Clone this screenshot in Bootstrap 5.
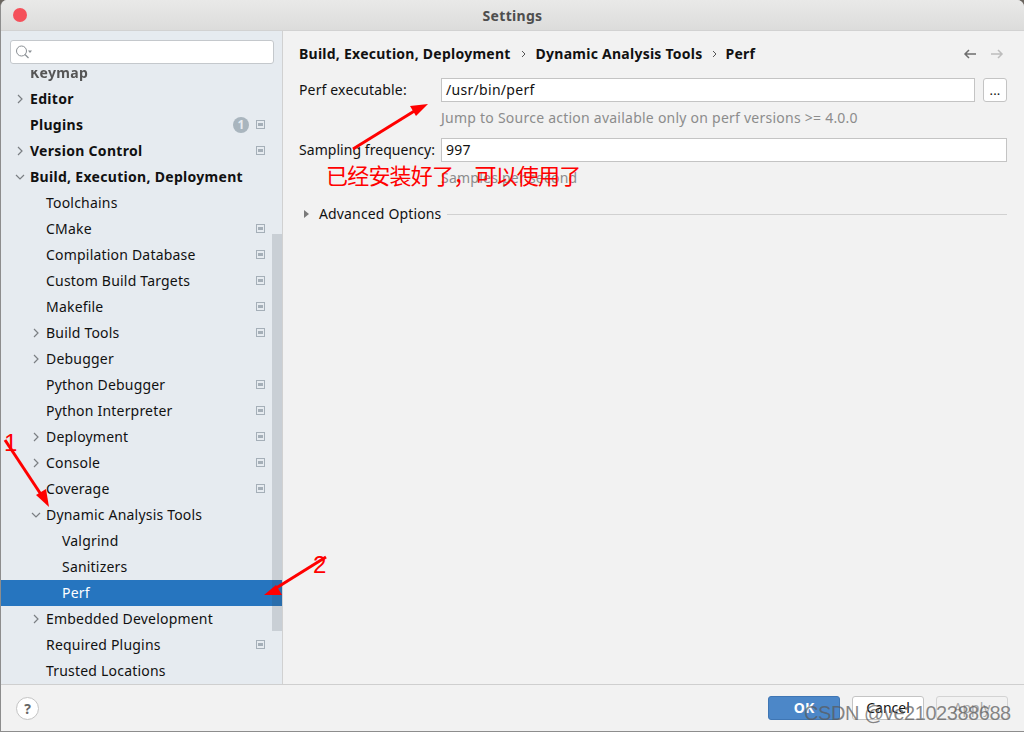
<!DOCTYPE html>
<html lang="en">
<head>
  <meta charset="UTF-8" />
  <title>Settings</title>
  <link href="https://cdn.jsdelivr.net/npm/bootstrap@5.3.0/dist/css/bootstrap.min.css" rel="stylesheet" />
  <style>
    html, body { margin: 0; width: 1024px; height: 732px; overflow: hidden; background: #6b6660; }
    body { font-family: "Noto Sans", "Noto Sans CJK SC", sans-serif; font-size: 14px; color: #111; }
    .win { width: 1024px; height: 732px; position: relative; background: #f2f2f2; border-left: 1px solid #8d8d8d; border-bottom: 1px solid #8d8d8d; border-radius: 7px 7px 0 0; overflow: hidden; }
    .titlebar { height: 31px; background: linear-gradient(#e9e9e8, #dcdcdb); border-bottom: 1px solid #d2d2d2; position: relative; }
    .titlebar-name { font-weight: 700; font-size: 14px; color: #4e4e4e; line-height: 31px; letter-spacing: .3px; }
    .close-dot { width: 14px; height: 14px; border-radius: 50%; background: #f5505a; position: absolute; left: 12px; top: 8px; }
    .main-area { height: 653px; }
    .side { width: 282px; background: #e6ebf0; border-right: 1px solid #d1d1d1; flex: none; position: relative; overflow: hidden; }
    .search { height: 24px; margin: 9px 8px 0 9px; background: #fff; border: 1px solid #c4c8cc; border-radius: 3px; }
    .tree { height: 614px; margin-top: 6px; overflow: hidden; }
    .tree-in { margin-top: -10px; }
    .t-row { height: 26px; line-height: 26px; position: relative; white-space: nowrap; }
    .t-row.sel { background: #2675bf; color: #fff; }
    .bold-row { font-weight: 700; padding-left: 29px; letter-spacing: .3px; }
    .l1 { padding-left: 45px; letter-spacing: .2px; }
    .l2 { padding-left: 61px; letter-spacing: .2px; }
    .keymap-row { color: #555; filter: blur(.5px); }
    .chev { position: absolute; top: 8px; width: 10px; height: 10px; }
    .proj-ic { position: absolute; top: 8px; left: 255px; width: 9px; height: 9px; border: 1px solid #a5afb8; background: #e6ebf0; }
    .proj-ic::after { content: ""; display: block; margin: 2px 1px 0; height: 3px; background: #a5afb8; }
    .count { position: absolute; left: 232px; top: 5px; width: 16px; height: 16px; border-radius: 8px; background: #a9b5be; color: #e6ebf0; font-size: 12px; font-weight: 700; line-height: 16px; text-align: center; letter-spacing: 0; }
    .thumb { position: absolute; left: 271px; top: 203px; width: 10px; height: 397px; background: rgba(60, 70, 85, .17); }
    .content { padding: 13px 17px 0 16px; }
    .crumbs { height: 20px; line-height: 20px; font-weight: 700; letter-spacing: .25px; }
    .crumb-gt { margin: 0 9px 0 10px; }
    .crumb-gt.last { margin: 0 8px 0 9px; }
    .nav-arrows { gap: 13px; margin-right: 3px; }
    .form-line { height: 24px; line-height: 24px; letter-spacing: .15px; white-space: nowrap; }
    .line-first { margin-top: 14px; }
    .line-second { margin-top: 10px; }
    .line-adv { margin-top: 14px; }
    .form-lab { width: 142px; flex: none; }
    .lab-tight { letter-spacing: .05px; }
    .inp { height: 24px; background: #fff; border: 1px solid #c4c4c4; padding-left: 4px; line-height: 22px; letter-spacing: .3px; }
    .dots { width: 24px; height: 24px; margin-left: 8px; flex: none; background: #fff; border: 1px solid #c4c4c4; border-radius: 3px; text-align: center; line-height: 22px; font-size: 13px; }
    .hint { margin-top: 6px; margin-left: 142px; color: #8c8c8c; letter-spacing: .24px; line-height: 20px; height: 20px; }
    .adv-line { flex: 1; height: 1px; background: #d1d1d1; margin-left: 6px; }
    .foot { height: 47px; border-top: 1px solid #cfcfcf; background: #f2f2f2; padding: 0 16px 0 15px; }
    .help { width: 23px; height: 23px; border-radius: 50%; background: #fff; border: 1px solid #c4c4c4; text-align: center; font-weight: 700; font-size: 14px; line-height: 21px; color: #666; }
    .btn-gap { gap: 12px; }
    .dlg-btn { width: 72px; height: 24px; border: 1px solid #c4c4c4; border-radius: 3px; background: #fff; font-size: 14px; line-height: 22px; text-align: center; }
    .dlg-btn.ok { background: #4c87c8; border-color: #3f76b4; color: #fff; font-weight: 700; }
    .dlg-btn.off { background: #f2f2f2; border-color: #d3d3d3; color: #a8a8a8; }
    .note { position: absolute; left: 325px; top: 159px; font-family: "Noto Sans CJK SC", sans-serif; font-size: 22px; line-height: 30px; color: #f00; white-space: nowrap; letter-spacing: -.8px; }
    .num-mark { position: absolute; font-family: "Liberation Sans", sans-serif; font-size: 24px; color: #f00; line-height: 24px; }
    .mark-one { left: 3px; top: 431px; }
    .mark-two { left: 312px; top: 553px; }
    .marks { position: absolute; left: 0; top: 0; }
    .wm { position: absolute; left: 803px; top: 701px; font-family: "Liberation Sans", sans-serif; font-size: 20px; line-height: 24px; color: rgba(90, 90, 90, .72); white-space: nowrap; letter-spacing: -.45px; }
  </style>
</head>
<body>
<div class="win">
  <div class="titlebar text-center">
    <span class="close-dot"></span>
    <span class="titlebar-name">Settings</span>
  </div>
  <div class="main-area d-flex">
    <!-- Left tree -->
    <div class="side">
      <div class="search d-flex align-items-center ps-1">
        <svg width="18" height="16" viewBox="0 0 18 16"><circle cx="6.5" cy="7" r="5" fill="none" stroke="#8a8f94"/><path d="M10 10.5l3.5 3.5" stroke="#8a8f94" stroke-width="1.3"/><path d="M13 6.5h4l-2 2.5z" fill="#8a8f94"/></svg>
      </div>
      <div class="tree">
        <div class="tree-in" id="tree"></div>
      </div>
      <div class="thumb"></div>
    </div>
    <!-- Right panel -->
    <div class="content flex-grow-1">
      <div class="crumbs d-flex align-items-center">
        <span>Build, Execution, Deployment</span>
        <svg class="crumb-gt" width="6" height="10" viewBox="0 0 6 10"><path d="M1 2l3 3-3 3" fill="none" stroke="#555"/></svg>
        <span>Dynamic Analysis Tools</span>
        <svg class="crumb-gt last" width="6" height="10" viewBox="0 0 6 10"><path d="M1 2l3 3-3 3" fill="none" stroke="#555"/></svg>
        <span>Perf</span>
        <span class="ms-auto d-flex nav-arrows">
          <svg width="14" height="12" viewBox="0 0 14 12"><path d="M13 6H2M6 2L2 6l4 4" fill="none" stroke="#6e6e6e" stroke-width="1.5"/></svg>
          <svg width="14" height="12" viewBox="0 0 14 12"><path d="M1 6h11M8 2l4 4-4 4" fill="none" stroke="#bdbdbd" stroke-width="1.5"/></svg>
        </span>
      </div>
      <div class="form-line line-first d-flex">
        <div class="form-lab">Perf executable:</div>
        <div class="inp flex-grow-1">/usr/bin/perf</div>
        <div class="dots">...</div>
      </div>
      <div class="hint">Jump to Source action available only on perf versions &gt;= 4.0.0</div>
      <div class="form-line line-second d-flex">
        <div class="form-lab lab-tight">Sampling frequency:</div>
        <div class="inp flex-grow-1">997</div>
      </div>
      <div class="hint">Samples per second</div>
      <div class="form-line line-adv d-flex align-items-center">
        <svg width="20" height="10" viewBox="0 0 20 10"><path d="M5 1l5 4-5 4z" fill="#7a7a7a"/></svg>
        <span>Advanced Options</span>
        <div class="adv-line"></div>
      </div>
    </div>
  </div>
  <div class="foot d-flex align-items-center">
    <div class="help">?</div>
    <div class="ms-auto d-flex btn-gap">
      <div class="dlg-btn ok">OK</div>
      <div class="dlg-btn">Cancel</div>
      <div class="dlg-btn off">Apply</div>
    </div>
  </div>

  <!-- Annotations over the screenshot -->
  <svg class="marks" width="1024" height="732" viewBox="0 0 1024 732">
    <g stroke="#f00" stroke-width="3" fill="#f00">
      <path d="M352 149L415 110"/><path d="M427 104l-18 2 6 10z" stroke="none"/>
      <path d="M4 440L43 499"/><path d="M48 507l-13-12 10-6z" stroke="none"/>
      <path d="M325 557L272 590"/><path d="M263 595l18 0-6-10z" stroke="none"/>
    </g>
  </svg>
  <span class="num-mark mark-one">1</span>
  <span class="num-mark mark-two">2</span>
  <div class="note">已经安装好了，可以使用了</div>
  <div class="wm">CSDN @ve2102388688</div>
</div>
<script>
  // t: label, l: style, c: chevron (r/d), p: project icon
  const rows = [
    { t: 'Keymap', l: 'bold-row keymap-row' },
    { t: 'Editor', l: 'bold-row', c: 'r', x: 14 },
    { t: 'Plugins', l: 'bold-row', p: 1, n: 1 },
    { t: 'Version Control', l: 'bold-row', c: 'r', x: 14, p: 1 },
    { t: 'Build, Execution, Deployment', l: 'bold-row', c: 'd', x: 14 },
    { t: 'Toolchains', l: 'l1' },
    { t: 'CMake', l: 'l1', p: 1 },
    { t: 'Compilation Database', l: 'l1', p: 1 },
    { t: 'Custom Build Targets', l: 'l1', p: 1 },
    { t: 'Makefile', l: 'l1', p: 1 },
    { t: 'Build Tools', l: 'l1', c: 'r', x: 30, p: 1 },
    { t: 'Debugger', l: 'l1', c: 'r', x: 30 },
    { t: 'Python Debugger', l: 'l1', p: 1 },
    { t: 'Python Interpreter', l: 'l1', p: 1 },
    { t: 'Deployment', l: 'l1', c: 'r', x: 30, p: 1 },
    { t: 'Console', l: 'l1', c: 'r', x: 30, p: 1 },
    { t: 'Coverage', l: 'l1', p: 1 },
    { t: 'Dynamic Analysis Tools', l: 'l1', c: 'd', x: 30 },
    { t: 'Valgrind', l: 'l2' },
    { t: 'Sanitizers', l: 'l2' },
    { t: 'Perf', l: 'l2 sel' },
    { t: 'Embedded Development', l: 'l1', c: 'r', x: 30 },
    { t: 'Required Plugins', l: 'l1', p: 1 },
    { t: 'Trusted Locations', l: 'l1' }
  ];
  const chev = { r: 'M3 1l4 4-4 4', d: 'M1 3l4 4 4-4' };
  document.getElementById('tree').innerHTML = rows.map(r => `
    <div class="t-row ${r.l}">
      ${r.c ? `<svg class="chev" style="left:${r.x}px" viewBox="0 0 10 10"><path d="${chev[r.c]}" fill="none" stroke="#7b7f83" stroke-width="1.2"/></svg>` : ''}
      ${r.t}
      ${r.n ? `<span class="count">${r.n}</span>` : ''}
      ${r.p ? '<span class="proj-ic"></span>' : ''}
    </div>`).join('');
</script>
<script src="https://cdn.jsdelivr.net/npm/bootstrap@5.3.0/dist/js/bootstrap.bundle.min.js"></script>
</body>
</html>
